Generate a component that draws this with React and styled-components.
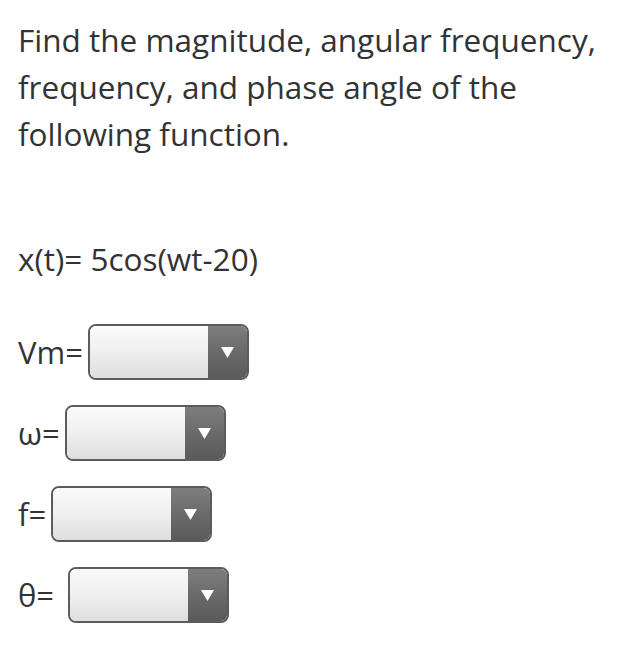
import React from "react";
import styled, { createGlobalStyle } from "styled-components";

const GlobalStyle = createGlobalStyle`
  body {
    margin: 0;
    background: #ffffff;
    font-family: "Open Sans", "Liberation Sans", sans-serif;
    color: #333333;
  }
`;

const fields = [
  { label: "Vm=", gap: 5 },
  { label: "ω=", gap: 5 },
  { label: "f=", gap: 5 },
  { label: "θ=", gap: 14 },
];

function App() {
  return (
    <>
      <GlobalStyle />
      <Page>
        <Question>
          Find the magnitude, angular frequency, frequency, and phase angle of
          the following function.
        </Question>
        <Formula>x(t)= 5cos(wt-20)</Formula>
        <Fields>
          {fields.map((f) => (
            <Row key={f.label}>
              <Label>{f.label}</Label>
              <Select gap={f.gap}>
                <Field />
                <Arrow>
                  <svg width="13" height="11" viewBox="0 0 13 11">
                    <polygon points="0,0 13,0 6.5,11" fill="#ffffff" />
                  </svg>
                </Arrow>
              </Select>
            </Row>
          ))}
        </Fields>
      </Page>
    </>
  );
}

const Page = styled.div`
  width: 626px;
  height: 651px;
  padding: 16px 18px 0 18px;
  box-sizing: border-box;
  display: flex;
  flex-direction: column;
`;

const Question = styled.p`
  margin: 0;
  font-size: 31.5px;
  line-height: 47px;
  width: 600px;
`;

const Formula = styled.p`
  margin: 78px 0 0 0;
  font-size: 31.5px;
  line-height: 47px;
`;

const Fields = styled.div`
  margin-top: 42px;
  display: flex;
  flex-direction: column;
  gap: 25px;
`;

const Row = styled.div`
  display: flex;
  align-items: center;
  height: 56px;
`;

const Label = styled.span`
  font-size: 31px;
  line-height: 1;
`;

const Select = styled.div`
  margin-left: ${(p) => p.gap}px;
  width: 161px;
  height: 56px;
  box-sizing: border-box;
  border: 2px solid #5c5c5c;
  border-radius: 8px;
  overflow: hidden;
  display: flex;
`;

const Field = styled.div`
  flex: 1;
  background: linear-gradient(180deg, #fafafa 0%, #efefef 50%, #dedede 100%);
`;

const Arrow = styled.div`
  width: 39px;
  display: flex;
  align-items: center;
  justify-content: center;
  background: linear-gradient(180deg, #7e7e7e 0%, #6a6a6a 50%, #5a5a5a 100%);
`;

export default App;
